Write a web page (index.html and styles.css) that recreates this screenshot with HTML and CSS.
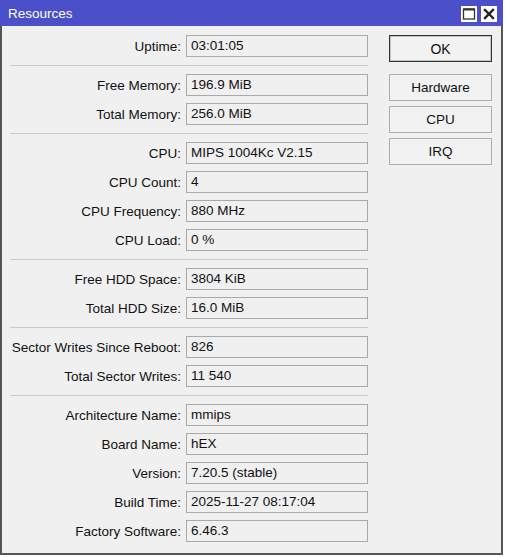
FILE: index.html
```html
<!DOCTYPE html>
<html>
<head>
<meta charset="utf-8">
<link rel="stylesheet" href="styles.css">
</head>
<body>
<div class="window">
  <div class="titlebar">
    <span class="title">Resources</span>
    <div class="tb-btns">
      <span class="tb-btn"><svg width="16" height="16" viewBox="0 0 16 16"><rect x="2.5" y="3" width="11" height="10" fill="none" stroke="#333" stroke-width="1.3"/><rect x="2.5" y="2.5" width="11" height="2" fill="#333"/></svg></span>
      <span class="tb-btn"><svg width="16" height="16" viewBox="0 0 16 16"><path d="M4 4 L12 12 M12 4 L4 12" stroke="#222" stroke-width="2.4" stroke-linecap="square"/></svg></span>
    </div>
  </div>
  <div class="content">
    <div class="form">
      <div class="section">
        <span class="label">Uptime:</span><span class="field">03:01:05</span>
      </div>
      <div class="sep"></div>
      <div class="section">
        <span class="label">Free Memory:</span><span class="field">196.9 MiB</span>
        <span class="label">Total Memory:</span><span class="field">256.0 MiB</span>
      </div>
      <div class="sep"></div>
      <div class="section">
        <span class="label">CPU:</span><span class="field">MIPS 1004Kc V2.15</span>
        <span class="label">CPU Count:</span><span class="field">4</span>
        <span class="label">CPU Frequency:</span><span class="field">880 MHz</span>
        <span class="label">CPU Load:</span><span class="field">0 %</span>
      </div>
      <div class="sep"></div>
      <div class="section">
        <span class="label">Free HDD Space:</span><span class="field">3804 KiB</span>
        <span class="label">Total HDD Size:</span><span class="field">16.0 MiB</span>
      </div>
      <div class="sep"></div>
      <div class="section">
        <span class="label">Sector Writes Since Reboot:</span><span class="field">826</span>
        <span class="label">Total Sector Writes:</span><span class="field">11 540</span>
      </div>
      <div class="sep"></div>
      <div class="section">
        <span class="label">Architecture Name:</span><span class="field">mmips</span>
        <span class="label">Board Name:</span><span class="field">hEX</span>
        <span class="label">Version:</span><span class="field">7.20.5 (stable)</span>
        <span class="label">Build Time:</span><span class="field">2025-11-27 08:17:04</span>
        <span class="label">Factory Software:</span><span class="field">6.46.3</span>
      </div>
    </div>
    <div class="buttons">
      <div class="btn default">OK</div>
      <div class="btn">Hardware</div>
      <div class="btn">CPU</div>
      <div class="btn">IRQ</div>
    </div>
  </div>
</div>
</body>
</html>
```
FILE: styles.css
```css
html, body {
  margin: 0;
  padding: 0;
  background: #ffffff;
}
body {
  font-family: "Liberation Sans", Arial, sans-serif;
  font-size: 13.5px;
  color: #111;
}
.window {
  width: 499px;
  height: 553px;
  border: 2px solid #555;
  border-top: none;
  background: #f0f0f0;
  display: flex;
  flex-direction: column;
}
.titlebar {
  height: 26px;
  margin: 0 -2px;
  background: #4b4fc9;
  display: flex;
  align-items: center;
  justify-content: space-between;
  padding: 0 6px 0 8px;
}
.title {
  color: #fff;
  font-size: 13.5px;
}
.tb-btns {
  display: flex;
  gap: 4px;
  margin-top: 2px;
}
.tb-btn {
  width: 16px;
  height: 16px;
  background: #fff;
  display: flex;
}
.content {
  display: flex;
  padding: 9px 0 0 8px;
}
.form {
  width: 358px;
}
.section {
  display: grid;
  grid-template-columns: 1fr 182px;
  grid-auto-rows: 22px;
  column-gap: 5px;
  row-gap: 7px;
  align-items: center;
}
.label {
  text-align: right;
  white-space: nowrap;
}
.field {
  height: 22px;
  box-sizing: border-box;
  border: 1px solid #a9a9a9;
  padding: 0 4px;
  line-height: 20px;
  white-space: nowrap;
}
.sep {
  height: 1px;
  background: #c9c9c9;
  margin: 8px 0;
}
.buttons {
  margin-left: 21px;
  width: 103px;
  display: flex;
  flex-direction: column;
  gap: 5px;
}
.btn {
  height: 27px;
  box-sizing: border-box;
  border: 1px solid #adadad;
  background: #f2f2f2;
  display: flex;
  align-items: center;
  justify-content: center;
}
.btn.default {
  border: 1px solid #333;
  box-shadow: inset 0 0 0 1px #c4c4c4;
  margin-bottom: 7px;
  font-size: 14px;
}
```
